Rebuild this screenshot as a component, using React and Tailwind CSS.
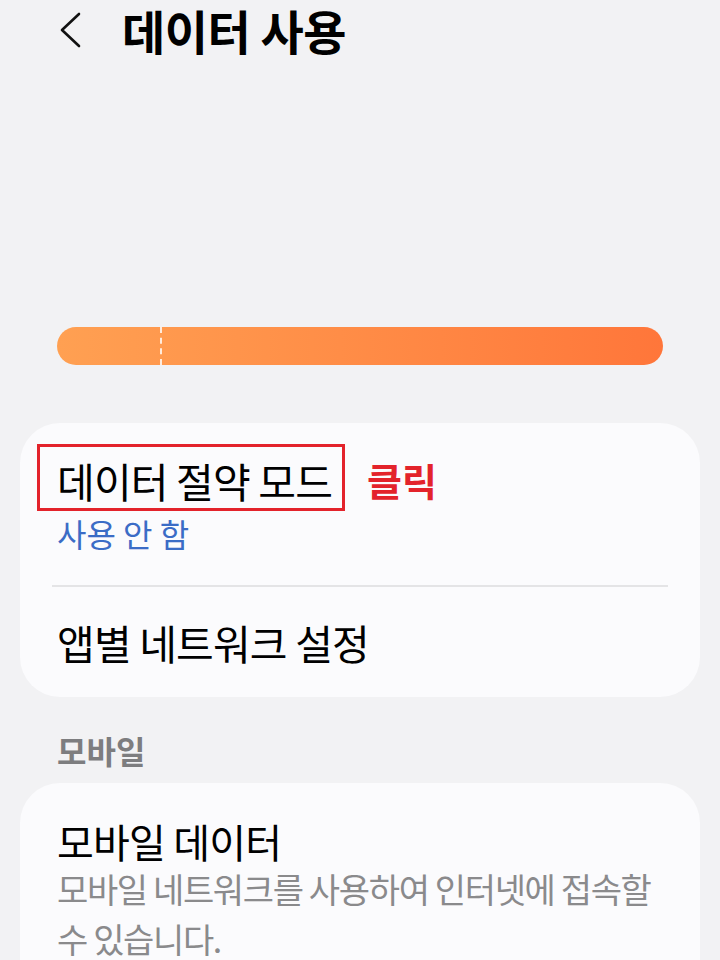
import React from 'react'

const font = { fontFamily: '"Noto Sans CJK KR", "Noto Sans", sans-serif' }

function Header() {
    return (
        <div className="flex items-center h-[60px]">
            <div className="w-[122px] flex items-center pl-[58px]">
                <svg width="24" height="38" viewBox="0 0 24 38" fill="none">
                    <path d="M21 3 L4 19 L21 35" stroke="#111" strokeWidth="2.6" strokeLinecap="round" strokeLinejoin="round" />
                </svg>
            </div>
            <h1 className="text-[47px] leading-[60px] font-bold text-black tracking-[-0.01em]">데이터 사용</h1>
        </div>
    )
}

function UsageBar() {
    return (
        <div className="mx-[57px] mt-[267px] h-[38px] rounded-full bg-gradient-to-r from-[#ffa052] to-[#ff763a] relative overflow-hidden">
            <div className="absolute left-[103px] top-0 bottom-0 border-l-2 border-dashed border-white/80"></div>
        </div>
    )
}

function App() {
    return (
        <div style={font} className="w-[720px] h-[960px] bg-[#f2f2f4] overflow-hidden">
            <Header />
            <UsageBar />

            <div className="mx-[20px] mt-[58px] rounded-[40px] bg-[#fbfbfd] pt-[33px] pb-[31px]">
                <div className="px-[37px]">
                    <div className="flex items-center">
                        <div className="relative">
                            <span className="text-[41px] leading-[48px] text-black tracking-[-0.02em]">데이터 절약 모드</span>
                            <div className="absolute left-[-20px] right-[-13px] top-[-12px] bottom-[-7px] border-[3px] border-[#e3232b]"></div>
                        </div>
                        <span className="ml-[35px] text-[38px] leading-[48px] font-bold text-[#e3232b]">클릭</span>
                    </div>
                    <p className="mt-[9px] text-[32px] leading-[40px] text-[#3b6cc6]">사용 안 함</p>
                </div>
                <div className="mx-[32px] mt-[32px] h-[2px] bg-[#e4e4e6]"></div>
                <div className="px-[37px] mt-[31px]">
                    <p className="text-[41px] leading-[48px] text-black tracking-[-0.02em]">앱별 네트워크 설정</p>
                </div>
            </div>

            <p className="mt-[34px] px-[57px] text-[32px] leading-[38px] font-bold text-[#7d7d7f]">모바일</p>

            <div className="mx-[20px] mt-[14px] rounded-t-[40px] bg-[#fbfbfd] pt-[35px] px-[37px] pb-[30px]">
                <p className="text-[40px] leading-[46px] text-black tracking-[-0.02em]">모바일 데이터</p>
                <p className="text-[34px] leading-[50px] text-[#8a8a8c] tracking-[-0.04em]">모바일 네트워크를 사용하여 인터넷에 접속할 수 있습니다.</p>
            </div>
        </div>
    )
}

export default App
